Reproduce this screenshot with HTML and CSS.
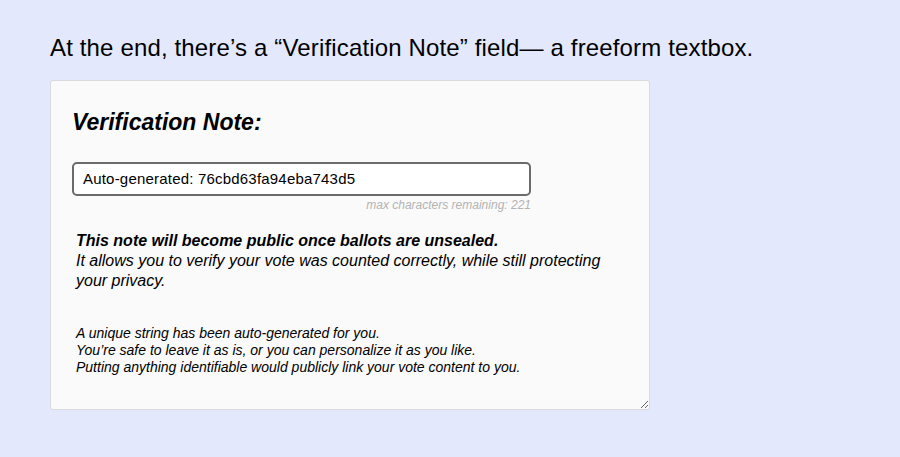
FILE: index.html
```html
<!DOCTYPE html>
<html>
<head>
<meta charset="utf-8">
<link rel="stylesheet" href="styles.css">
</head>
<body>
<main class="page">
  <h1 class="intro">At the end, there’s a “Verification Note” field— a freeform textbox.</h1>
  <section class="card">
    <h2 class="card-title">Verification Note:</h2>
    <div class="field">
      <div class="input">Auto-generated: 76cbd63fa94eba743d5</div>
      <div class="counter">max characters remaining: 221</div>
    </div>
    <p class="public">
      <strong>This note will become public once ballots are unsealed.</strong><br>
      It allows you to verify your vote was counted correctly, while still protecting your privacy.
    </p>
    <p class="hint">
      A unique string has been auto-generated for you.<br>
      You’re safe to leave it as is, or you can personalize it as you like.<br>
      Putting anything identifiable would publicly link your vote content to you.
    </p>
  </section>
</main>
</body>
</html>
```
FILE: styles.css
```css
html, body {
  margin: 0;
  padding: 0;
  background: #e3e8fd;
  font-family: "Liberation Sans", Arial, sans-serif;
  color: #000;
}
.page {
  padding: 34px 50px 0 50px;
}
.intro {
  margin: 0 0 18px 0;
  font-size: 24px;
  font-weight: normal;
  line-height: 28px;
  letter-spacing: 0.15px;
}
.card {
  width: 600px;
  height: 330px;
  box-sizing: border-box;
  background: #fafafa;
  border: 1px solid #d9d9de;
  border-radius: 3px;
  padding: 27px 21px 0 21px;
  resize: both;
  overflow: hidden;
}
.card-title {
  margin: 0 0 26px 0;
  font-size: 23px;
  font-style: italic;
  font-weight: bold;
  line-height: 28px;
}
.field {
  width: 459px;
}
.input {
  box-sizing: border-box;
  height: 34px;
  border: 2px solid #6b6b6b;
  border-radius: 5px;
  padding: 0 9px;
  font-size: 15px;
  line-height: 30px;
  letter-spacing: 0.2px;
  background: #fff;
}
.counter {
  text-align: right;
  font-size: 12px;
  font-style: italic;
  color: #b3b3b3;
  line-height: 15px;
  margin-top: 2px;
}
.public {
  margin: 18px 0 0 4px;
  font-size: 16px;
  font-style: italic;
  line-height: 20px;
  width: 530px;
}
.hint {
  margin: 34px 0 0 4px;
  font-size: 14px;
  font-style: italic;
  line-height: 17px;
}
```
